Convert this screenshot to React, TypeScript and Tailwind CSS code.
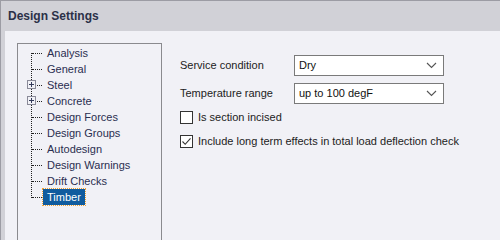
import React, { useState } from 'react'

const treeItems = [
    { label: 'Analysis', plus: false },
    { label: 'General', plus: false },
    { label: 'Steel', plus: true },
    { label: 'Concrete', plus: true },
    { label: 'Design Forces', plus: false },
    { label: 'Design Groups', plus: false },
    { label: 'Autodesign', plus: false },
    { label: 'Design Warnings', plus: false },
    { label: 'Drift Checks', plus: false },
    { label: 'Timber', plus: false },
]

const Chevron = () => (
    <svg width="11" height="7" viewBox="0 0 11 7" className="shrink-0">
        <path d="M1 1 L5.5 5.5 L10 1" fill="none" stroke="#555" strokeWidth="1.1" />
    </svg>
)

const SelectBox = ({ value }: { value: string }) => (
    <div className="w-[150px] h-[21px] bg-white border border-[#7a7a7a] flex items-center justify-between pl-[4px] pr-[6px] text-[11px] text-[#111]">
        <span className="whitespace-nowrap">{value}</span>
        <Chevron />
    </div>
)

const CheckBox = ({ checked, label }: { checked: boolean; label: string }) => (
    <div className="flex flex-row items-center gap-[5px] h-[13px]">
        <span className="w-[13px] h-[13px] shrink-0 bg-white border border-[#333] flex items-center justify-center">
            {checked && (
                <svg width="11" height="11" viewBox="0 0 11 11">
                    <path d="M1.5 5.5 L4.2 8.3 L9.5 2.3" fill="none" stroke="#333" strokeWidth="1.1" />
                </svg>
            )}
        </span>
        <p className="text-[11px] text-[#222] whitespace-nowrap">{label}</p>
    </div>
)

const App = () => {
    const [selected, setSelected] = useState('Timber')

    return (
        <div className="w-[500px] h-[240px] overflow-hidden flex flex-col bg-[#d1d1d7] border-t border-l border-[#9c9ca4] font-['Liberation_Sans',Arial,sans-serif]">
            {/* title */}
            <div className="h-[30px] shrink-0 flex items-center pl-[7px]">
                <p className="text-[12px] font-bold text-[#2b3048]">Design Settings</p>
            </div>
            <div className="flex-1 ml-[4px] bg-[#f1f1f6] flex flex-row pt-[12px] pl-[12px]">
                {/* tree */}
                <div className="w-[145px] h-[220px] shrink-0 border border-[#8a8a8e] relative pt-[1px]">
                    <div className="absolute left-[13px] top-[9px] h-[145px] border-l border-dotted border-[#222]" />
                    {treeItems.map((item) => (
                        <div key={item.label} className="h-[16px] flex flex-row items-center relative">
                            <span className="w-[10px] ml-[14px] border-t border-dotted border-[#222]" />
                            {item.plus && (
                                <span className="absolute left-[9px] top-[3px] w-[9px] h-[9px] bg-[#f1f1f6] border border-[#8a8a98] flex items-center justify-center">
                                    <svg width="7" height="7" viewBox="0 0 7 7">
                                        <path d="M1 3.5 H6 M3.5 1 V6" stroke="#333a5a" strokeWidth="1" />
                                    </svg>
                                </span>
                            )}
                            <p
                                onClick={() => setSelected(item.label)}
                                className={`ml-[1px] h-[16px] flex items-center px-[4px] text-[11px] whitespace-nowrap cursor-pointer ${selected === item.label ? 'bg-[#0f5b9e] text-white outline outline-1 outline-dotted outline-[#f0a030]' : 'text-[#2a2e50]'}`}
                            >
                                {item.label}
                            </p>
                        </div>
                    ))}
                </div>
                {/* options */}
                <div className="flex flex-col pl-[18px] pt-[12px] gap-[7px]">
                    <div className="flex flex-row items-center">
                        <p className="w-[114px] text-[11px] text-[#222] whitespace-nowrap">Service condition</p>
                        <SelectBox value="Dry" />
                    </div>
                    <div className="flex flex-row items-center">
                        <p className="w-[114px] text-[11px] text-[#222] whitespace-nowrap">Temperature range</p>
                        <SelectBox value="up to 100 degF" />
                    </div>
                    <div className="flex flex-col gap-[11px]">
                        <CheckBox checked={false} label="Is section incised" />
                        <CheckBox checked={true} label="Include long term effects in total load deflection check" />
                    </div>
                </div>
            </div>
        </div>
    )
}

export default App
